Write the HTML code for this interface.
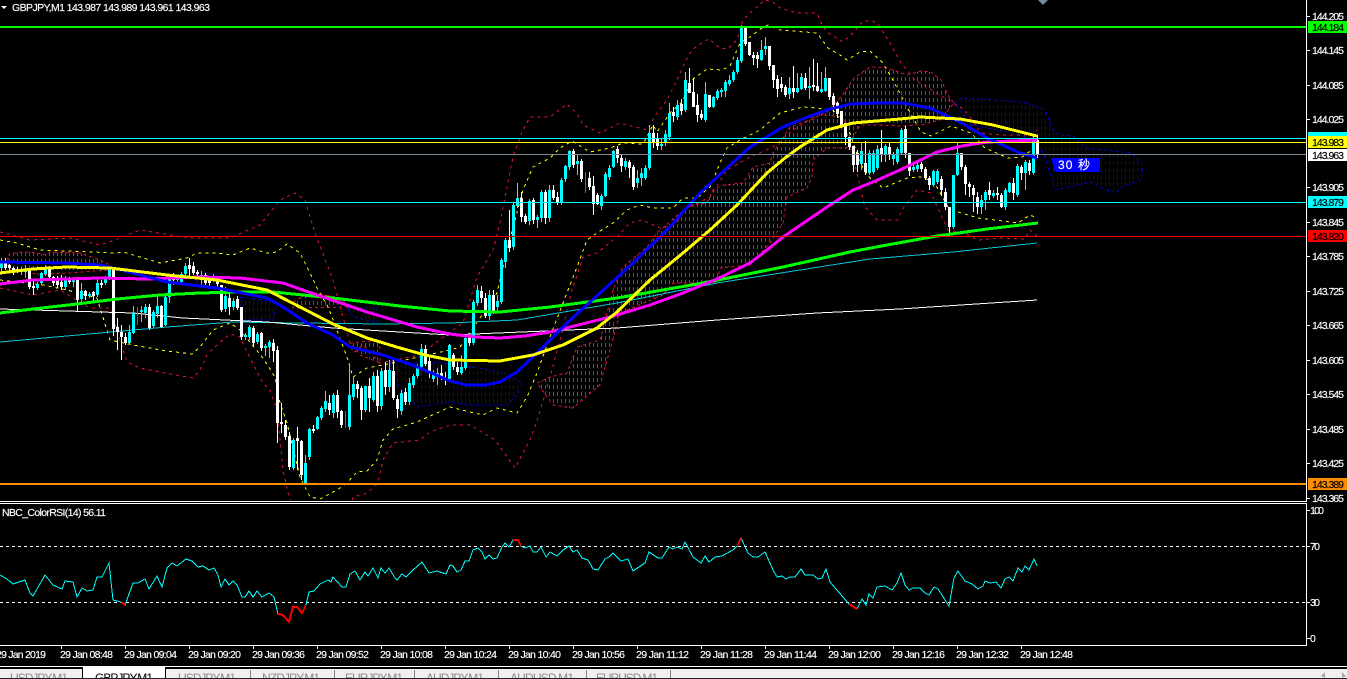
<!DOCTYPE html>
<html><head><meta charset="utf-8"><title>GBPJPY,M1</title>
<style>
html,body{margin:0;padding:0;background:#000;width:1347px;height:679px;overflow:hidden}
svg{position:absolute;left:0;top:0;display:block}
text{font-family:"Liberation Sans","Noto Sans CJK JP",sans-serif;font-size:10.5px;fill:#fff;stroke:#fff;stroke-width:.15}
.c{shape-rendering:crispEdges;fill:none}
text.b{fill:#000;stroke:#000}
text.t{fill:#8a8a8a;stroke:none;font-size:12px}
</style></head><body>
<svg width="1347" height="679" viewBox="0 0 1347 679" xmlns="http://www.w3.org/2000/svg">
<defs>
<pattern id="hr" patternUnits="userSpaceOnUse" width="4" height="7"><rect x="1" y="0" width="1" height="4" fill="#dc143c"/></pattern>
<pattern id="hb" patternUnits="userSpaceOnUse" width="4" height="7"><rect x="1" y="0" width="1" height="4" fill="#0000cd"/></pattern>
<clipPath id="ch"><rect x="0" y="0" width="1306" height="500"/></clipPath>
</defs>
<rect width="1347" height="679" fill="#000"/>
<g clip-path="url(#ch)">
<!-- clouds -->
<g class="c" stroke-width="1" stroke-dasharray="3 3">
<polygon fill="url(#hr)" stroke="#dc143c" points="8,255 12,253 30,252 47,255 50,252 80,253 100,260 110,265 110,270 40,275 8,268"/>
<polygon fill="url(#hb)" stroke="#0000cd" points="197,272 217,275 217,290 197,287"/>
<polygon fill="url(#hb)" stroke="#0000cd" points="240,297 277,302 273,320 240,320"/>
<polygon fill="url(#hr)" stroke="#dc143c" points="293,302 310,292 340,298 350,307 293,308"/>
<polygon fill="url(#hb)" stroke="#0000cd" points="347,308 377,308 378,323 353,317"/>
<polygon fill="url(#hr)" stroke="#dc143c" points="350,343 380,340 380,363 360,355"/>
<polygon fill="url(#hb)" stroke="#0000cd" points="390,362 450,363 505,373 523,383 517,395 507,405 470,405 450,402 417,407 393,380"/>
<polygon fill="url(#hr)" stroke="#dc143c" points="537,383 550,377 567,373 577,347 600,340 613,290 623,267 647,247 657,233 680,213 690,205 707,203 713,190 723,185 743,183 753,167 770,163 773,153 790,127 810,120 827,112 842,96 854,78 870,67 887,68 907,75 921,71 931,72 941,80 949,97 954,103 940,120 921,125 900,126 880,125 860,125 847,148 827,148 813,160 812,177 807,188 787,197 783,223 770,243 750,265 720,268 717,283 673,283 663,295 620,313 610,350 600,385 573,408 553,405"/>
<polygon fill="url(#hb)" stroke="#0000cd" points="954,103 961,98 998,100 1028,103 1045,110 1054,133 1075,137 1085,148 1133,153 1143,167 1141,180 1122,187 1116,193 1102,188 1092,182 1079,185 1055,190 1050,173 1042,150 1022,135 971,125"/>
</g>
<!-- bollinger -->
<g class="c" stroke-width="1" stroke-dasharray="3 4">
<polyline stroke="#ff0" points="0,240 17,243 40,250 117,253 123,252 140,257 160,263 187,258 197,253 217,253 233,255 250,248 267,253 277,252 287,244 300,253 310,273 317,288 328,307 337,330 347,357 353,377 367,368 383,365 450,350 460,347 497,293 507,250 523,190 533,167 550,158 560,148 572,141 590,152 610,148 623,143 643,144 653,125 657,132 670,113 682,102 692,80 700,74 707,69 722,70 730,66 740,43 750,37 762,28 768,25 780,30 817,33 828,48 840,55 847,60 860,52 870,51 883,63 894,82 907,107 921,132 931,136 951,126 971,133 985,148 1008,158 1022,157 1032,150 1037,140"/>
<polyline stroke="#ff0" points="0,280 43,285 67,290 97,298 110,340 133,345 167,351 192,354 200,347 213,330 230,323 240,330 263,358 275,377 280,403 287,423 300,477 310,497 320,499 337,490 347,483 357,472 367,471 377,460 383,440 393,429 417,422 450,407 470,412 483,415 497,408 517,413 527,397 537,373 550,337 563,303 577,267 587,240 597,233 613,223 627,210 640,205 653,208 673,208 683,198 697,198 710,187 720,163 727,148 740,140 760,130 780,113 803,107 817,108 833,110 850,133 860,163 870,178 883,188 907,178 921,177 934,182 948,207 958,212 978,218 995,220 1018,223 1030,215 1037,218"/>
<polyline stroke="#dc143c" points="0,232 30,240 70,238 100,245 115,240 140,230 190,238 230,238 260,225 280,200 295,193 305,200 315,233 333,280 343,317 353,353 363,345 380,363 420,355 450,332 463,323 477,277 493,250 500,223 513,157 522,132 530,117 550,117 567,104 577,113 583,125 600,133 620,123 647,130 657,113 667,100 677,80 685,62 692,50 703,42 709,39 720,48 728,49 737,40 743,20 750,13 765,0 773,2 780,8 797,13 817,13 822,25 827,32 843,42 853,33 863,21 873,21 878,24 890,43 901,63 915,80 935,92 953,103 965,110 981,133 1001,135 1032,135 1037,130"/>
<polyline stroke="#dc143c" points="0,288 33,295 60,290 90,308 110,308 127,362 140,368 170,374 193,378 200,370 208,353 230,334 240,337 250,358 263,383 270,390 277,410 283,470 289,497 295,510 350,510 353,497 367,493 378,483 383,460 393,443 420,440 430,432 450,425 470,425 495,440 515,468 530,440 538,418 550,377 560,340 572,290 583,257 597,253 617,237 630,223 642,220 660,228 677,223 683,210 710,197 727,170 750,157 773,147 793,130 817,115 843,117 853,157 865,207 877,220 897,220 904,207 917,190 931,193 948,230 965,233 978,240 1001,238 1025,239 1030,230 1037,236"/>
</g>
<!-- thin MAs -->
<polyline class="c" stroke="#00c4d4" stroke-width="1" points="0,342 100,333 167,327 233,322 300,323 383,324 450,323 517,320 617,303 717,283 800,270 870,259 953,252 1037,243"/>
<polyline class="c" stroke="#fff" stroke-width="1" points="0,309 67,311 133,313 183,318 267,322 333,328 450,335 617,328 717,320 817,313 900,309 1037,300"/>
<!-- candles -->
<g class="c" transform="translate(.5 0)">
<path stroke="#fff" stroke-width="1" d="M5 258V270M9 264V273M13 267V275M17 267V273M29 268V289M33 280V295M49 266V280M53 276V286M57 276V288M61 275V290M69 277V284M77 280V312M85 290V300M93 291V303M101 280V288M113 269V336M117 318V350M121 325V360M125 333V345M149 304V330M161 305V328M173 273V285M189 258V279M193 262V275M197 270V278M205 273V286M209 276V287M217 276V288M221 285V312M229 290V315M237 296V310M241 307V340M253 326V346M261 332V351M273 339V362M277 346V443M281 403V433M285 420V440M289 432V470M297 427V470M301 440V480M313 425V433M329 395V415M337 390V418M341 410V428M357 381V398M361 386V420M369 378V412M377 370V412M385 362V395M393 360V400M397 395V418M405 388V405M425 345V366M429 356V378M441 365V380M445 372V385M453 353V370M457 362V375M469 335V346M481 286V303M485 293V318M493 290V314M509 210V252M521 192V222M525 214V224M533 198V224M545 190V224M553 185V200M557 192V205M573 149V168M581 159V182M589 172V190M593 176V215M597 193V205M617 146V163M621 155V172M629 160V178M633 165V190M653 125V148M657 133V150M673 107V122M681 99V115M689 68V93M693 78V107M697 94V122M701 110V120M709 95V108M745 28V46M749 42V56M753 52V65M757 52V68M769 46V70M773 65V88M777 75V97M781 77V92M785 85V97M793 66V98M805 73V90M813 59V91M817 63V92M829 78V100M833 93V112M837 102V118M841 111V128M845 123V145M849 137V150M853 146V172M857 150V172M865 141V175M881 130V162M889 143V160M905 126V158M909 153V176M921 162V172M925 167V180M929 176V190M941 176V196M945 188V210M949 207V237M961 153V170M965 165V195M969 182V197M973 185V212M977 192V214M989 182V200M997 187V200M1001 193V208M1013 178V200M1021 165V180M1029 160V175M1037 135V158"/>
<path stroke="#0ff" stroke-width="1" d="M1 258V275M21 267V275M25 265V278M37 282V290M41 272V285M45 265V276M65 276V290M73 277V287M81 283V303M89 292V298M97 277V297M105 276V285M109 266V280M129 325V345M133 306V334M141 306V322M145 304V318M153 310V328M157 294V318M165 296V326M169 278V303M177 275V283M181 272V285M185 263V276M201 271V285M213 274V282M225 287V312M233 298V310M245 333V340M249 325V340M257 332V344M265 344V356M269 340V358M293 438V470M305 455V484M309 428V460M317 416V430M321 406V420M325 391V412M333 393V418M349 363V430M353 376V400M365 386V412M373 372V402M381 368V410M389 360V392M401 390V415M409 378V405M413 374V388M417 364V378M421 344V368M433 370V382M437 368V385M449 344V382M461 355V375M465 335V370M473 300V345M477 285V306M489 290V320M497 295V312M501 258V304M505 238V268M513 203V250M517 183V208M529 199V225M537 215V228M541 190V222M549 185V222M561 178V205M565 165V182M569 150V170M577 155V175M601 194V210M605 172V197M609 165V180M613 150V168M625 158V170M637 170V188M641 168V186M645 165V180M649 125V170M661 138V150M665 130V146M669 103V140M677 100V120M685 72V112M705 82V122M713 96V108M717 89V100M721 88V97M725 80V97M729 75V86M733 70V82M737 57V74M741 25V63M761 40V61M765 37V55M789 77V99M797 73V93M801 73V90M809 67V99M821 72V93M825 67V92M861 142V170M869 150V175M873 150V174M877 145V170M885 144V162M893 152V165M897 147V164M901 128V155M913 165V172M917 163V172M933 170V187M937 169V184M953 175V229M957 143V176M981 195V214M985 190V210M993 190V198M1005 188V210M1009 182V193M1017 164V197M1025 160V190M1033 135V175"/>
<path stroke="#f0f" stroke-width="1" d="M137 307V325M345 411V428M585 172V193"/>
<path stroke="#fff" stroke-width="3" d="M5 261V268M9 265V268M13 268V272M17 269V271M29 268V287M33 286V288M49 268V277M53 277V283M57 279V285M61 282V287M69 279V282M77 280V300M85 291V296M93 292V296M101 283V285M113 269V329M117 327V332M121 332V337M125 337V343M149 307V328M161 306V327M173 278V280M189 265V269M193 266V273M197 272V274M205 275V283M209 279V283M217 277V284M221 285V310M229 298V307M237 299V308M241 307V337M253 328V343M261 333V348M273 343V351M277 350V423M281 422V424M285 425V437M289 436V467M297 438V441M301 441V475M313 429V431M329 403V410M337 395V412M341 411V425M357 384V389M361 388V410M369 386V398M377 376V406M385 370V387M393 371V398M397 399V409M405 392V402M425 349V364M429 361V372M441 373V378M445 378V380M453 355V367M457 367V372M469 337V343M481 291V298M485 298V316M493 295V312M509 240V248M521 198V217M525 216V222M533 200V220M545 192V218M553 190V198M557 197V202M573 151V165M581 161V179M589 178V187M593 186V204M597 195V204M617 149V158M621 158V166M629 162V168M633 167V187M653 133V142M657 138V146M673 112V116M681 104V111M689 83V93M693 92V107M697 105V115M701 114V118M709 95V107M745 28V44M749 42V55M753 55V58M757 55V59M769 46V66M773 65V80M777 79V89M781 84V88M785 87V95M793 88V92M805 78V88M813 85V87M817 86V91M829 78V97M833 96V105M837 103V114M841 111V126M845 123V137M849 137V147M853 146V165M857 153V165M865 163V172M881 148V155M889 147V155M905 129V153M909 153V171M921 164V169M925 169V178M929 178V185M941 179V190M945 192V207M949 207V227M961 153V167M965 167V184M969 184V187M973 188V195M977 197V207M989 190V195M997 193V195M1001 195V207M1013 183V193M1021 167V173M1029 163V171M1037 140V155"/>
<path stroke="#0ff" stroke-width="3" d="M1 261V268M21 270V272M25 269V272M37 284V288M41 273V283M45 268V274M65 279V287M73 280V282M81 291V299M89 294V296M97 283V295M105 278V283M109 268V278M129 332V343M133 313V333M141 310V312M145 307V313M153 312V326M157 306V314M165 297V325M169 279V297M177 278V280M181 274V282M185 266V274M201 275V279M213 277V279M225 296V309M233 301V307M245 335V337M249 327V337M257 334V342M265 346V348M269 342V347M293 440V468M305 463V484M309 429V457M317 417V429M321 408V418M325 401V409M333 395V413M349 395V427M353 384V397M365 386V410M373 376V400M381 371V406M389 370V387M401 393V411M409 383V402M413 376V385M417 366V376M421 349V367M433 373V379M437 373V377M449 345V379M461 367V373M465 338V368M473 302V343M477 290V303M489 295V316M497 301V307M501 260V302M505 240V262M513 205V247M517 198V206M529 201V221M537 217V220M541 192V218M549 190V218M561 180V203M565 166V179M569 151V167M577 161V164M601 196V206M605 174V196M609 168V177M613 151V167M625 161V167M637 178V183M641 173V178M645 168V178M649 133V168M661 144V146M665 134V143M669 113V137M677 105V117M685 80V110M705 94V120M713 97V107M717 91V98M721 90V92M725 82V91M729 80V84M733 72V80M737 60V72M741 28V61M761 50V60M765 46V49M789 88V94M797 88V92M801 77V89M809 86V88M821 89V92M825 78V91M861 151V164M869 153V173M873 153V172M877 149V168M885 146V155M893 154V159M897 149V162M901 130V153M913 167V170M917 165V169M933 171V185M937 171V182M953 175V227M957 153V175M981 200V207M985 192V200M993 193V196M1005 190V207M1009 183V192M1017 166V195M1025 162V173M1033 138V173"/>
</g>
<!-- thick MAs -->
<g class="c" stroke-width="3" stroke-linejoin="round">
<polyline stroke="#00ff00" points="0,313 33,309 77,304 117,299 160,295 200,293 240,292 273,292 333,298 400,306 450,311 500,312 550,307 617,298 703,283 783,267 850,252 887,245 937,236 987,229 1038,223"/>
<polyline stroke="#ff00ff" points="0,284 33,280 100,278 147,279 200,277 240,278 283,283 317,295 367,312 417,327 450,334 475,337 500,338 525,336 550,332 610,317 650,305 683,293 717,279 750,263 767,250 783,237 805,222 827,207 853,190 873,182 900,170 937,152 962,146 987,142 1037,140"/>
<polyline stroke="#0000ff" points="0,262 67,263 100,265 133,273 167,282 217,288 267,298 283,307 307,323 333,335 350,347 383,355 415,366 450,381 467,385 485,385 500,382 517,372 537,353 567,323 600,293 633,263 667,230 700,193 727,168 750,147 783,127 805,118 827,110 850,104 877,103 903,103 930,108 960,122 987,138 1020,153 1037,158"/>
<polyline stroke="#ffff00" points="0,273 33,269 66,267 110,268 167,275 217,280 267,290 300,307 333,324 367,338 400,348 425,355 450,360 500,361 533,355 563,345 597,328 617,312 650,280 683,253 710,230 737,205 767,173 785,158 800,147 827,130 853,123 900,119 920,117 960,119 993,125 1037,136"/>
</g>
<!-- badge -->
<polygon points="1051,158 1100,158 1100,172 1055,172" fill="#0000ff"/>
<text x="1058" y="169" style="font-size:12px" textLength="32">30 秒</text>
<polygon points="1038,0 1048,0 1043,5" fill="#778899"/>
</g>
<!-- horizontal lines -->
<g class="c">
<rect x="0" y="26" width="1307" height="2" fill="#00ff00"/>
<rect x="0" y="138" width="1307" height="1" fill="#0ff"/>
<rect x="0" y="142" width="1307" height="1" fill="#ff0"/>
<rect x="0" y="154" width="1307" height="1" fill="#778899"/>
<rect x="0" y="202" width="1307" height="1" fill="#0ff"/>
<rect x="0" y="236" width="1307" height="1" fill="#f00"/>
<rect x="0" y="483" width="1307" height="2" fill="#ff8c00"/>
</g>
<!-- frame -->
<g class="c" fill="#fff">
<rect x="0" y="501" width="1307" height="1" fill="#fff"/>
<rect x="0" y="503" width="1307" height="1" fill="#fff"/>
<rect x="0" y="645" width="1307" height="1" fill="#fff"/>
<rect x="1306" y="0" width="1" height="502" fill="#fff"/>
<rect x="1306" y="503" width="1" height="143" fill="#fff"/>
</g>
<!-- price axis -->
<path class="c" stroke="#fff" d="M1307 16.500h3M1307 50.500h3M1307 85.500h3M1307 119.500h3M1307 187.500h3M1307 222.500h3M1307 256.500h3M1307 291.500h3M1307 325.500h3M1307 360.500h3M1307 394.500h3M1307 429.500h3M1307 463.500h3M1307 498.500h3"/>
<g>
<text x="1312" y="20" textLength="32">144.205</text>
<text x="1312" y="54" textLength="32">144.145</text>
<text x="1312" y="89" textLength="32">144.085</text>
<text x="1312" y="123" textLength="32">144.025</text>
<text x="1312" y="191" textLength="32">143.905</text>
<text x="1312" y="226" textLength="32">143.845</text>
<text x="1312" y="260" textLength="32">143.785</text>
<text x="1312" y="295" textLength="32">143.725</text>
<text x="1312" y="329" textLength="32">143.665</text>
<text x="1312" y="364" textLength="32">143.605</text>
<text x="1312" y="398" textLength="32">143.545</text>
<text x="1312" y="433" textLength="32">143.485</text>
<text x="1312" y="467" textLength="32">143.425</text>
<text x="1312" y="502" textLength="32">143.365</text>
</g>
<rect class="c" x="1308" y="21" width="39" height="12" style="fill:#00ff00"/>
<rect class="c" x="1308" y="132" width="39" height="12" style="fill:#00ffff"/>
<rect class="c" x="1308" y="136" width="39" height="12" style="fill:#ffff00"/>
<rect class="c" x="1308" y="149" width="39" height="12" style="fill:#ffffff"/>
<rect class="c" x="1308" y="196" width="39" height="12" style="fill:#00ffff"/>
<rect class="c" x="1308" y="230" width="39" height="12" style="fill:#ff0000"/>
<rect class="c" x="1308" y="478" width="39" height="12" style="fill:#ff8c00"/>
<text class="b" x="1312" y="31" textLength="32">144.184</text>
<text class="b" x="1312" y="146" textLength="32">143.983</text>
<text class="b" x="1312" y="159" textLength="32">143.963</text>
<text class="b" x="1312" y="206" textLength="32">143.879</text>
<text class="b" x="1312" y="240" textLength="32">143.820</text>
<text class="b" x="1312" y="488" textLength="32">143.389</text>
<!-- header -->
<polygon points="1,6 7,6 4,9" fill="#fff"/>
<text x="12" y="11" textLength="198">GBPJPY,M1  143.987 143.989 143.961 143.963</text>
<text x="2" y="516" textLength="104">NBC_ColorRSI(14) 56.11</text>
<!-- RSI -->
<g class="c">
<path stroke="#fff" stroke-dasharray="3 3" d="M0 546.500H1306M0 602.500H1306"/>
<polyline stroke="#0ff" stroke-width="1" points="0,575 7,579 13,584 25,580 30,593 33,596 45,575 53,585 62,589 65,581 73,582 77,597 82,588 87,591 93,590 97,577 102,577 109,563 113,600 121,602 125,605 133,583 138,583 145,579 149,589 157,576 162,587 167,568 172,563 177,566 186,559 192,561 198,567 203,566 209,570 214,568 218,575 221,587 225,579 229,585 233,581 237,585 242,597 245,597 249,591 253,597 257,591 262,597 269,593 274,597 278,614 283,615 289,622 293,607 297,607 302,613 306,605 309,592 314,591 320,584 328,580 331,582 333,577 342,587 346,587 350,574 355,571 360,580 365,572 368,576 373,568 378,578 381,568 385,573 389,568 395,578 397,580 402,574 406,577 413,570 422,562 429,573 437,571 446,574 450,565 453,566 457,572 461,570 465,561 469,561 473,550 478,548 482,552 485,559 489,555 493,559 497,558 502,547 505,543 509,547 513,540 518,540 521,546 525,548 530,546 533,552 537,552 541,547 546,557 550,552 557,556 563,550 569,546 573,552 577,550 582,558 588,560 593,569 598,570 605,559 609,557 613,553 621,561 628,559 633,571 645,563 649,552 658,558 662,558 669,547 673,549 677,547 682,549 685,542 693,557 701,563 705,556 709,562 715,557 722,556 733,550 737,546 741,538 748,553 753,557 758,557 765,552 773,570 777,577 782,576 786,579 790,577 795,577 801,569 805,575 813,575 818,579 822,578 826,569 830,582 849,604 857,609 862,599 866,605 869,594 873,598 877,587 885,586 892,590 897,583 901,573 905,585 909,590 913,588 920,588 925,593 929,595 934,587 938,589 949,606 954,578 958,571 965,581 972,584 978,589 983,586 985,581 990,583 996,582 1001,588 1005,579 1009,577 1013,581 1018,568 1022,572 1025,566 1029,570 1034,559 1037,566"/>
<g stroke="#f00" stroke-width="2">
<polyline points="121,602 125,605"/>
<polyline points="278,614 283,615 289,622 293,607 297,607 302,613 306,605"/>
<polyline points="513,540 518,540 521,546"/>
<polyline points="737,546 741,538"/>
<polyline points="849,604 857,609"/>
</g>
</g>
<text x="1310" y="514" textLength="14">100</text>
<text x="1310" y="550" textLength="10">70</text>
<text x="1310" y="606" textLength="10">30</text>
<text x="1310" y="642">0</text>
<path class="c" stroke="#fff" d="M1307 546.500h3M1307 602.500h3M1307 510.500h3M1307 638.500h3"/>
<!-- time ticks -->
<path class="c" stroke="#fff" d="M61.500 646v3M125.500 646v3M189.500 646v3M253.500 646v3M317.500 646v3M381.500 646v3M445.500 646v3M509.500 646v3M573.500 646v3M637.500 646v3M701.500 646v3M765.500 646v3M829.500 646v3M893.500 646v3M957.500 646v3M1021.500 646v3"/>
<text x="-4" y="658" textLength="50">29 Jan 2019</text>
<text x="60" y="658" textLength="53">29 Jan 08:48</text>
<text x="124" y="658" textLength="53">29 Jan 09:04</text>
<text x="188" y="658" textLength="53">29 Jan 09:20</text>
<text x="252" y="658" textLength="53">29 Jan 09:36</text>
<text x="316" y="658" textLength="53">29 Jan 09:52</text>
<text x="380" y="658" textLength="53">29 Jan 10:08</text>
<text x="444" y="658" textLength="53">29 Jan 10:24</text>
<text x="508" y="658" textLength="53">29 Jan 10:40</text>
<text x="572" y="658" textLength="53">29 Jan 10:56</text>
<text x="636" y="658" textLength="53">29 Jan 11:12</text>
<text x="700" y="658" textLength="53">29 Jan 11:28</text>
<text x="764" y="658" textLength="53">29 Jan 11:44</text>
<text x="828" y="658" textLength="53">29 Jan 12:00</text>
<text x="892" y="658" textLength="53">29 Jan 12:16</text>
<text x="956" y="658" textLength="53">29 Jan 12:32</text>
<text x="1020" y="658" textLength="53">29 Jan 12:48</text>
<!-- tab bar -->
<rect class="c" x="0" y="666" width="1347" height="1" style="fill:#fff"/>
<rect class="c" x="0" y="668" width="1347" height="11" style="fill:#f0f0f0"/>
<path class="c" stroke="#000" d="M0 668.500H1347M82.500 668V678M165.500 668V678"/>
<rect class="c" x="83" y="667" width="82" height="12" style="fill:#fff"/>
<path class="c" stroke="#808080" d="M250.500 670V678M334.500 670V678M414.500 670V678M498.500 670V678M586.500 670V678M670.500 670V678"/>
<text class="t" x="10" y="682" textLength="58">USDJPY,M1</text>
<text class="t" x="95" y="682" textLength="58" style="fill:#000">GBPJPY,M1</text>
<text class="t" x="178" y="682" textLength="58">USDJPY,M1</text>
<text class="t" x="262" y="682" textLength="58">NZDJPY,M1</text>
<text class="t" x="345" y="682" textLength="58">EURJPY,M1</text>
<text class="t" x="426" y="682" textLength="58">AUDJPY,M1</text>
<text class="t" x="510" y="682" textLength="64">AUDUSD,M1</text>
<text class="t" x="596" y="682" textLength="62">EURUSD,M1</text>
<polygon points="1325,672 1321,676 1325,678" fill="#aaa"/>
<polygon points="1342,672 1346,676 1342,678" fill="#aaa"/>
<rect class="c" x="0" y="678" width="1347" height="1" style="fill:#222"/>
</svg>
</body></html>
